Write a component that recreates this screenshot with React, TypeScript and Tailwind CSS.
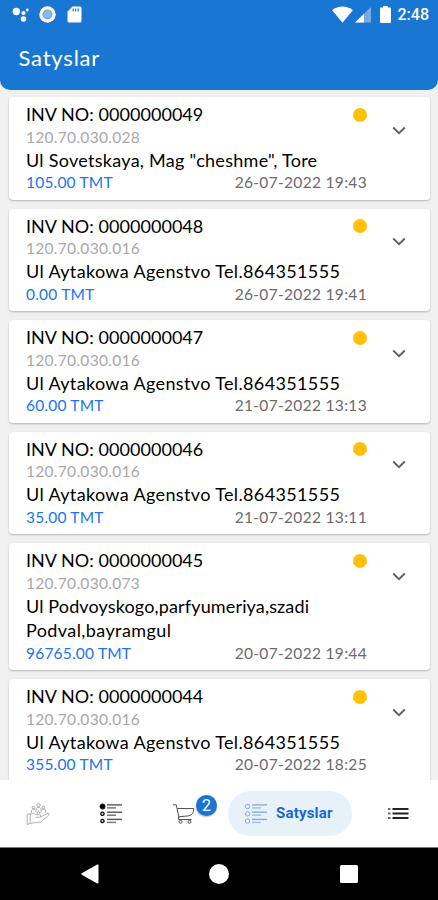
import { ReactNode } from 'react';

interface Invoice {
    no: string;
    code: string;
    lines: { text: string; className: string }[];
    total: string;
    date: string;
}

const agency = [{ text: 'Ul Aytakowa Agenstvo Tel.864351555', className: 'tracking-[0.36px]' }];

const invoices: Invoice[] = [
    {
        no: '0000000049',
        code: '120.70.030.028',
        lines: [{ text: 'Ul Sovetskaya, Mag "cheshme", Tore', className: 'tracking-[0.28px]' }],
        total: '105.00 TMT',
        date: '26-07-2022 19:43',
    },
    { no: '0000000048', code: '120.70.030.016', lines: agency, total: '0.00 TMT', date: '26-07-2022 19:41' },
    { no: '0000000047', code: '120.70.030.016', lines: agency, total: '60.00 TMT', date: '21-07-2022 13:13' },
    { no: '0000000046', code: '120.70.030.016', lines: agency, total: '35.00 TMT', date: '21-07-2022 13:11' },
    {
        no: '0000000045',
        code: '120.70.030.073',
        lines: [
            { text: 'Ul Podvoyskogo,parfyumeriya,szadi', className: 'tracking-[0.14px]' },
            { text: 'Podval,bayramgul', className: 'tracking-[0.4px]' },
        ],
        total: '96765.00 TMT',
        date: '20-07-2022 19:44',
    },
    { no: '0000000044', code: '120.70.030.016', lines: agency, total: '355.00 TMT', date: '20-07-2022 18:25' },
];

const StatusBar = () => (
    <div className="flex h-7 items-center justify-between pl-3 pr-[9px] text-white">
        <div className="flex items-center">
            <svg className="h-[17px] w-[18px]" viewBox="0 0 18 17" fill="currentColor">
                <circle cx="4.3" cy="5.5" r="3.7" />
                <circle cx="11.5" cy="7" r="2.1" />
                <circle cx="15.3" cy="4" r="1.4" />
                <circle cx="11.5" cy="13" r="2.8" />
            </svg>
            <svg className="ml-[9px] h-[17px] w-[17px]" viewBox="0 0 17 17">
                <circle cx="8.5" cy="8.5" r="8.2" fill="currentColor" />
                <circle cx="8.5" cy="8.5" r="5" fill="#6fa5df" />
                <circle cx="8.5" cy="8.5" r="3.8" fill="#8db8e6" />
            </svg>
            <svg className="ml-[11px] h-[17px] w-[15px]" viewBox="0 0 15 17">
                <path d="M5.6 0.5H13a1.5 1.5 0 0 1 1.5 1.5v13A1.5 1.5 0 0 1 13 16.5H2A1.5 1.5 0 0 1 .5 15V5.8z" fill="currentColor" />
                <path d="M6.2 2.5v3M8.7 2.5v3M11.2 2.5v3" stroke="#1976d2" strokeWidth="1.2" />
            </svg>
        </div>
        <div className="flex items-center">
            <svg className="h-[17px] w-[21px]" viewBox="0 0 21 17" fill="currentColor">
                <path d="M.2 4.2C6 -.7 15 -.7 20.8 4.2L10.5 16.7z" />
            </svg>
            <svg className="ml-[2px] h-[17px] w-[16px]" viewBox="0 0 16 17" fill="currentColor">
                <path d="M16 1v15.5H0z" opacity="0.4" />
                <path d="M9 7.8v8.7H0z" />
            </svg>
            <svg className="ml-[9px] h-[17px] w-[11px]" viewBox="0 0 11 17" fill="currentColor">
                <path d="M3.2 0h4.6v1.6H10a1 1 0 0 1 1 1V16a1 1 0 0 1-1 1H1a1 1 0 0 1-1-1V2.6a1 1 0 0 1 1-1h2.2z" />
            </svg>
            <span className="ml-[7px] pt-px font-['Roboto',sans-serif] text-[16px] font-medium leading-[18px]">2:48</span>
        </div>
    </div>
);

const InvoiceCard = ({ invoice }: { invoice: Invoice }) => (
    <div className="flex shrink-0 rounded-[4px] bg-white pb-[6.5px] pl-[17.5px] pt-[5.5px] shadow-[0_1px_2px_rgba(0,0,0,0.25)]">
        <div className="w-[341px]">
            <div className="flex h-6 items-center justify-between">
                <span className="text-[18px] tracking-[0.04px] text-black">INV NO: {invoice.no}</span>
                <span className="h-[14px] w-[14px] rounded-full bg-[#ffc107]" />
            </div>
            <div className="h-[22px] text-[15.5px] leading-[21px] tracking-[0.3px] text-[#a8a8a8]">{invoice.code}</div>
            {invoice.lines.map((line) => (
                <div key={line.text} className="h-[24.5px] whitespace-nowrap text-[18px] leading-[23.5px] text-black">
                    <span className={line.className}>{line.text}</span>
                </div>
            ))}
            <div className="flex h-5 items-center justify-between text-[15.5px]">
                <span className="tracking-[0.2px] text-[#1b74f0]">{invoice.total}</span>
                <span className="tracking-[0.32px] text-[#6b6b6b]">{invoice.date}</span>
            </div>
        </div>
        <svg className="ml-[25px] mt-[23px] h-[9px] w-[14px]" viewBox="0 0 14 9" fill="none">
            <path d="M1.2 1.5L7 7.2l5.8-5.7" stroke="#606060" strokeWidth="1.9" />
        </svg>
    </div>
);

const HandsIcon = () => (
    <svg className="h-6 w-6" viewBox="0 0 24 24" fill="none" stroke="#999" strokeWidth="0.8">
        <path d="M1.2 12.5l3-1v9.800l-3 1.200zM4.200 13c2-2.200 4-1.800 5.600-.3h3.700c1.800 0 1.800 2.600 0 2.600H9.500M14.500 15l6.700-3.500c1.600-.6 2.600.8 1.300 1.900L14.800 20l-6.800.8-3.800.5" />
        <circle cx="12.500" cy="3.200" r="1.600" />
        <path d="M10 10.500V7.800c0-3.300 5-3.300 5 0v2.700" />
        <circle cx="7.500" cy="5.500" r="1.300" />
        <circle cx="17.500" cy="5.500" r="1.300" />
        <path d="M5.300 11V9c0-2 2.800-2.500 4-1M19.700 11V9c0-2-2.800-2.500-4-1M11 11.500l1.500-3 1.500 3" />
    </svg>
);

const RowsIcon = ({ active = false }: { active?: boolean }) => (
    <svg className="h-[22px] w-6" viewBox="0 0 24 22" fill="none">
        {[3.5, 10.8, 18].map((y, i) => (
            <g key={y}>
                <circle
                    cx="3.5"
                    cy={y}
                    r={active ? 2.2 : i === 0 ? 2.3 : 1.7}
                    fill={active ? 'none' : i === 0 ? '#000' : '#bbb'}
                    stroke={active ? '#86a9e4' : '#111'}
                    strokeWidth={active ? 1 : 1.2}
                />
                <path d={`M8 ${y - 1.6}h15`} stroke={active ? '#8aabe4' : '#555'} strokeWidth="1.4" />
                <path d={`M8 ${y + 1.4}h9`} stroke={active ? '#a7bfec' : '#777'} strokeWidth="1.5" />
            </g>
        ))}
    </svg>
);

const CartIcon = () => (
    <svg className="h-5 w-[22px]" viewBox="0 0 22 20" fill="none" stroke="#555" strokeWidth="1">
        <path d="M0 .8h3.2L6 13.500M4.200 4.500h16.600c0 4-1.500 6.500-5 7.300L6 12.800M5.500 15.300v-2.500M5.500 15.500h13" />
        <circle cx="7.500" cy="17.800" r="1.500" />
        <circle cx="16.500" cy="17.800" r="1.500" />
    </svg>
);

const MenuIcon = () => (
    <svg className="h-[13px] w-[21px]" viewBox="0 0 21 13">
        <path d="M0 2h2.5M0 6.500h2.500M0 11h2.500" stroke="#666" strokeWidth="1.8" />
        <path d="M4.500 2h16M4.500 6.500h16M4.500 11h16" stroke="#222" strokeWidth="1.9" />
    </svg>
);

const NavItem = ({ className, children }: { className: string; children: ReactNode }) => (
    <button className={`flex h-[45px] items-center ${className}`}>{children}</button>
);

const BottomNav = () => (
    <nav className="flex h-[67px] shrink-0 items-center bg-white pl-[26px]">
        <NavItem className="w-6">
            <HandsIcon />
        </NavItem>
        <NavItem className="ml-[49px] w-6">
            <RowsIcon />
        </NavItem>
        <NavItem className="relative ml-[50px] w-[22px]">
            <CartIcon />
            <span className="absolute left-[23px] top-[4px] flex h-[21px] w-[21px] items-center justify-center rounded-full bg-[#1976d2] font-['Roboto',sans-serif] text-[16px] text-white shadow-[0_1px_2px_rgba(0,0,0,0.3)]">
                2
            </span>
        </NavItem>
        <NavItem className="ml-[33px] w-[124px] rounded-full bg-[#e7f1fa] pl-[16px]">
            <RowsIcon active />
            <span className="ml-[8px] font-['Roboto',sans-serif] text-[15px] font-bold tracking-[0.2px] text-[#1969cc]">Satyslar</span>
        </NavItem>
        <NavItem className="ml-[36px] w-[21px]">
            <MenuIcon />
        </NavItem>
    </nav>
);

const SystemBar = () => (
    <div className="flex h-[53px] shrink-0 items-center border-t border-[#777] bg-black pl-[81px]">
        <svg className="h-5 w-[18px]" viewBox="0 0 18 20" fill="#fff">
            <path d="M16.2.6c.8-.4 1.300 0 1.300.8v17.200c0 .8-.5 1.200-1.300.8L.8 10.700q-1-.7 0-1.400z" />
        </svg>
        <span className="ml-[110px] h-5 w-5 rounded-full bg-white" />
        <span className="ml-[111px] h-[18px] w-[18px] rounded-[1.5px] bg-white" />
    </div>
);

export default function App() {
    return (
        <div className="flex h-[900px] w-[438px] flex-col overflow-hidden bg-[#f0f0f0] font-['Lato',sans-serif]">
            <header className="h-[89.5px] shrink-0 rounded-b-[10px] bg-[#1976d2]">
                <StatusBar />
                <h1 className="pl-[18.5px] pt-[15px] text-[22px] leading-[30px] tracking-[0.8px] text-white">Satyslar</h1>
            </header>
            <main className="flex h-[690.5px] shrink-0 flex-col gap-[9px] overflow-hidden pl-[8.5px] pr-[8px] pt-[7.5px]">
                {invoices.map((invoice) => (
                    <InvoiceCard key={invoice.no} invoice={invoice} />
                ))}
            </main>
            <BottomNav />
            <SystemBar />
        </div>
    );
}
